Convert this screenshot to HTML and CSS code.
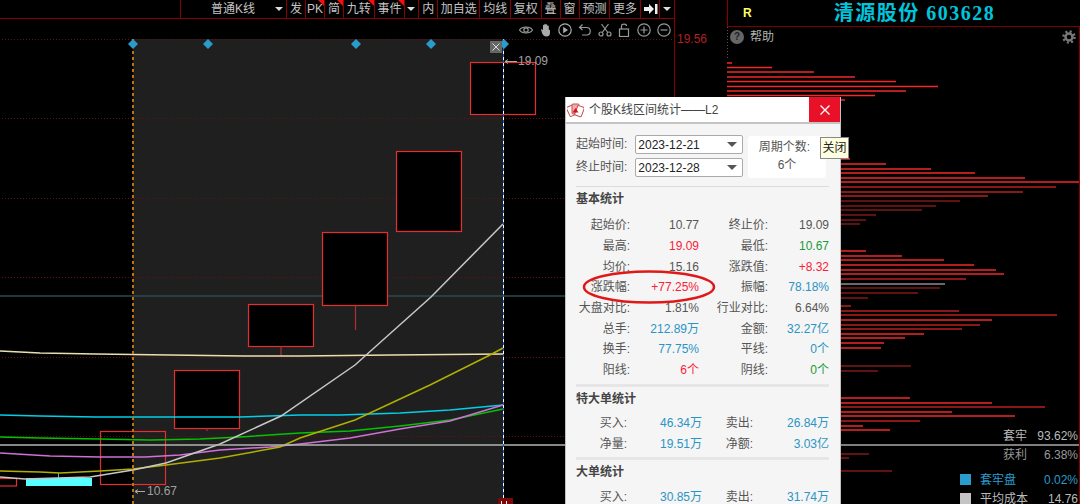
FILE: index.html
```html
<!DOCTYPE html>
<html lang="en">
<head>
  <meta charset="UTF-8">
  <title>个股K线区间统计</title>
  <link rel="stylesheet" href="styles.css">
</head>
<body>
<div class="screen">

  <!-- Left: toolbar + K line chart -->
  <div class="main">
    <div class="toolbar">
      <div class="cell cell-kind">普通K线<span class="arrow"></span></div>
      <div class="cell">发</div>
      <div class="cell mark">PK</div>
      <div class="cell mark">简</div>
      <div class="cell cell-two mark">九转</div>
      <div class="cell cell-two mark">事件</div>
      <div class="cell cell-drop"><span class="arrow"></span></div>
      <div class="cell">内</div>
      <div class="cell cell-three">加自选</div>
      <div class="cell cell-two">均线</div>
      <div class="cell cell-two">复权</div>
      <div class="cell">叠</div>
      <div class="cell">窗</div>
      <div class="cell cell-two">预测</div>
      <div class="cell cell-two">更多</div>
      <div class="cell cell-icon">
        <svg width="14" height="12" viewBox="0 0 14 12"><path d="M0 4H5V1L10 6L5 11V8H0Z" fill="#eee"/><rect x="11" y="1" width="2.5" height="10" fill="#eee"/></svg>
      </div>
      <div class="cell cell-drop"><span class="arrow"></span></div>
    </div>

    <div class="chart">
      <svg class="chart-svg" width="727" height="485" viewBox="0 19 727 485">
        <!-- selected range -->
        <rect x="133" y="39" width="370" height="465" fill="#1f1f1f"/>

        <!-- grid -->
        <path d="M2 39.5H674M2 118.5H674M2 198.5H674M2 277.5H674M2 357.5H674M2 436.5H674" stroke="#6a0f0f" stroke-dasharray="1 2" fill="none"/>
        <path d="M674.5 19V504" stroke="#8a0000" fill="none"/>
        <path d="M0 296H565" stroke="#2f4a4f" stroke-width="1.500" fill="none"/>

        <!-- candles -->
        <g fill="#000" stroke="#e62e2e" stroke-width="1.200">
          <rect x="-10.5" y="478.5" width="27" height="7.5"/>
          <rect x="100.5" y="431.5" width="65" height="53" fill="none"/>
          <rect x="174.5" y="370.5" width="65" height="58"/>
          <rect x="248.5" y="304.5" width="65" height="42"/>
          <rect x="322.5" y="232.5" width="65" height="73"/>
          <rect x="396.5" y="151.5" width="65" height="80"/>
          <rect x="470.5" y="62.5" width="65" height="52"/>
          <path d="M207 428V431M281 346V356M355.500 305V330" fill="none" stroke="#b03030"/>
        </g>
        <rect x="26" y="478" width="66" height="8" fill="#5ff"/>
        <path d="M58.500 473V478" stroke="#3cc" fill="none"/>

        <!-- averages -->
        <g fill="none" stroke-width="1.500">
          <polyline stroke="#e8e0b0" points="0,351 40,353 96,354 170,355 244,356 300,356 392,355 503,354"/>
          <polyline stroke="#00cfe6" points="0,415 40,416 96,417 240,417 300,415 340,415 400,413 450,410 503,405"/>
          <polyline stroke="#00c400" points="0,437 40,438 100,439 150,440 200,439 240,437 300,433 350,431 400,426 450,420 503,409"/>
          <polyline stroke="#d070d8" points="0,453 50,456 100,457 145,457 180,455 220,450 270,447 300,444 350,438 400,429 450,421 503,405"/>
          <polyline stroke="#b0b000" points="0,471 40,472 60,473 100,471 133,469 166,465 220,458 280,447 300,438 355,420 430,385 490,355 503,348"/>
          <polyline stroke="#c8c8c8" points="0,477 25,479 90,477 133,470 166,463 220,444 281,416 355,365 431,297 503,224"/>
        </g>
        <path d="M0 445H727" stroke="#b4b4b4" stroke-width="1.500" fill="none"/>

        <!-- range edges -->
        <path d="M133 39V504" stroke="#c07408" stroke-width="2" stroke-dasharray="3 3" fill="none"/>
        <path d="M503.500 39V504" stroke="#1a5fc0" fill="none"/>
        <path d="M503.500 39V504" stroke="#fff" stroke-dasharray="3 3" fill="none"/>
        <g fill="#2a9ccc">
          <path d="M133 39L138 44L133 49L128 44Z"/>
          <path d="M208 39L213 44L208 49L203 44Z"/>
          <path d="M356 39L361 44L356 49L351 44Z"/>
          <path d="M431 39L436 44L431 49L426 44Z"/>
          <path d="M504 39L509 44L504 49L499 44Z"/>
        </g>
        <rect x="490" y="41" width="12" height="12" fill="#666"/>
        <path d="M492.500 43.500L499.500 50.500M499.500 43.500L492.500 50.500" stroke="#ddd" fill="none"/>
        <rect x="498" y="498" width="15" height="6" fill="#7a0a0a"/>
        <path d="M501.500 501V504M506.500 501V504" stroke="#eee" fill="none"/>

        <!-- price tags -->
        <path d="M505 61.500H517M508 59.500L505 61.500L508 63.500" stroke="#aaa" fill="none"/>
        <path d="M135 491.500H145M138 489.500L135 491.500L138 493.500" stroke="#aaa" fill="none"/>
        <text class="tag" x="518" y="65">19.09</text>
        <text class="tag" x="147" y="495">10.67</text>
        <text class="tag tag-top" x="677" y="43">19.56</text>
      </svg>

      <div class="tools">
        <svg width="14" height="14" viewBox="0 0 14 14" fill="none" stroke="#999" stroke-width="1.200"><path d="M0.500 7C3 3 11 3 13.500 7C11 11 3 11 0.500 7Z"/><circle cx="7" cy="7" r="2.200"/></svg>
        <svg width="14" height="14" viewBox="0 0 14 14" fill="#aaa"><path d="M2 6.500L3 6L4 7.500V2.500C4 1.500 5.200 1.500 5.300 2.500V1.500C5.300 0.500 6.700 0.500 6.800 1.500V2C6.900 1 8.200 1 8.300 2V3C8.500 2.200 9.800 2.300 9.800 3.300V7C10 6.500 11 6.500 11 7.500V10C11 12.500 9.500 13.500 7.500 13.500C5 13.500 4 12 3 10Z"/></svg>
        <svg width="14" height="14" viewBox="0 0 14 14" fill="none" stroke="#aaa" stroke-width="1.200"><circle cx="7" cy="7" r="6.200"/><path d="M5.200 3.800L10 7L5.200 10.200Z" fill="#aaa" stroke="none"/></svg>
        <svg width="14" height="14" viewBox="0 0 14 14" fill="none" stroke="#999" stroke-width="1.200"><path d="M4.500 1.500L1.500 4.500L4.500 7M1.500 4.500H8.500C13.500 4.500 13.500 12 8.500 12H4"/></svg>
        <svg width="14" height="14" viewBox="0 0 14 14" fill="none" stroke="#999" stroke-width="1.200"><circle cx="3" cy="11" r="2"/><circle cx="11" cy="11" r="2"/><path d="M4.200 9.500L10.500 1M9.800 9.500L3.500 1"/></svg>
        <svg width="14" height="14" viewBox="0 0 14 14" fill="none" stroke="#999" stroke-width="1.200"><rect x="2.500" y="6" width="9" height="7.500"/><path d="M4.500 6V3C4.500 0.500 9.500 0.500 9.500 3"/></svg>
        <svg width="14" height="14" viewBox="0 0 14 14" fill="none" stroke="#999" stroke-width="1.200"><circle cx="7" cy="7" r="6.200"/><path d="M3.500 7H10.500M7 3.500V10.500"/></svg>
        <svg width="14" height="14" viewBox="0 0 14 14" fill="none" stroke="#999" stroke-width="1.200"><circle cx="7" cy="7" r="6.200"/><path d="M3.500 7H10.500"/></svg>
      </div>
    </div>
  </div>

  <!-- Right: chip distribution -->
  <div class="side">
    <div class="side-head">
      <span class="side-r">R</span>
      <span class="side-title">清源股份 603628</span>
    </div>
    <div class="side-help">
      <span class="help-icon">?</span>
      <span>帮助</span>
      <svg class="gear" width="14" height="14" viewBox="0 0 14 14" fill="none" stroke="#777"><circle cx="7" cy="7" r="3.500" stroke-width="2.500"/><circle cx="7" cy="7" r="5.500" stroke-width="2.500" stroke-dasharray="2 2.320"/></svg>
    </div>

    <svg class="chips" width="353" height="477" viewBox="727 27 353 477" fill="none" stroke-width="1.500">
      <path stroke="#f02828" d="M727 63H732M727 67.500H772M727 72H814M727 77H855M727 81.500H896M727 86.500H938M727 91H906M727 95.500H875M727 100H845M727 159H850M727 164H886M727 169H931M727 173H975M727 178H1025M727 182H1080M727 251H866M727 256H902M727 260H944M727 265H974M727 270H996M727 274H1004M727 320H992M727 334H924M727 338H905M727 343H884M727 348H881M727 398H910M727 403H992M727 412H952M727 416H1015M727 426H863M727 430H890"/>
      <path stroke="#b82020" d="M727 187H1056M727 192H1023M727 196H988M727 279H966M727 306H851M727 311H959M727 315H1057M727 325H980M727 329H962M727 407H1045M727 421H920"/>
      <path stroke="#7e1818" d="M727 201H960M727 206H936M727 210H922M727 215H876M727 220H866M727 224H860M727 288H940M727 293H918M727 298H868M727 366H911M727 371H878M727 454H869M727 458H849M727 471H892"/>
      <path stroke="#8c8c8c" d="M727 284H945"/>
      <path stroke="#a8a8a8" d="M727 445H1080"/>
      <path stroke="#8a0000" stroke-width="1" d="M1079.500 27V504"/>
      <path stroke="#555" stroke-width="1" stroke-dasharray="1 2" d="M727.500 27V60"/>
    </svg>

    <div class="side-stats">
      <div class="stat-row stat-one"><span>套牢</span><b>93.62%</b></div>
      <div class="stat-row stat-two"><span>获利</span><b>6.38%</b></div>
      <div class="legend legend-blue"><i></i><span>套牢盘</span><b>0.02%</b></div>
      <div class="legend"><i></i><span>平均成本</span><b>14.76</b></div>
    </div>
  </div>
</div>

<!-- Range statistics dialog -->
<div class="dialog">
  <div class="dialog-title">
    <svg class="cards" width="17" height="16" viewBox="0 0 17 16">
      <rect x="1" y="4" width="7" height="10" rx="1" transform="rotate(-25 4 9)" fill="#fff" stroke="#d04848"/>
      <rect x="5" y="2" width="7" height="10" rx="1" fill="#e8b0b0" stroke="#d04848"/>
      <rect x="9" y="4" width="7" height="10" rx="1" transform="rotate(20 12 9)" fill="#fff" stroke="#d04848"/>
      <path d="M8.500 6L11.500 10.500H5.500Z" fill="#d01818"/>
    </svg>
    <span>个股K线区间统计——L2</span>
    <div class="dialog-close">
      <svg width="12" height="12" viewBox="0 0 12 12" stroke="#fff" stroke-width="1.300"><path d="M1.500 1.500L10.500 10.500M10.500 1.500L1.500 10.500"/></svg>
    </div>
  </div>

  <div class="dialog-body">
    <div class="range">
      <div class="range-fields">
        <div class="field"><label>起始时间:</label><div class="select">2023-12-21<span class="select-arrow"></span></div></div>
        <div class="field"><label>终止时间:</label><div class="select">2023-12-28<span class="select-arrow"></span></div></div>
      </div>
      <div class="period">
        <div class="period-label">周期个数:</div>
        <div>6个</div>
      </div>
    </div>

    <div class="section section-thin">
      <h4>基本统计</h4>
      <div class="stats">
        <span>起始价:</span><b>10.77</b><span>终止价:</span><b>19.09</b>
        <span>最高:</span><b class="red">19.09</b><span>最低:</span><b class="green">10.67</b>
        <span>均价:</span><b>15.16</b><span>涨跌值:</span><b class="red">+8.32</b>
        <span>涨跌幅:</span><b class="red">+77.25%</b><span>振幅:</span><b class="blue">78.18%</b>
        <span>大盘对比:</span><b>1.81%</b><span>行业对比:</span><b>6.64%</b>
        <span>总手:</span><b class="blue">212.89万</b><span>金额:</span><b class="blue">32.27亿</b>
        <span>换手:</span><b class="blue">77.75%</b><span>平线:</span><b class="blue">0个</b>
        <span>阳线:</span><b class="red">6个</b><span>阴线:</span><b class="green">0个</b>
      </div>
    </div>

    <div class="section">
      <h4>特大单统计</h4>
      <div class="stats stats-big">
        <span>买入:</span><b class="blue">46.34万</b><span>卖出:</span><b class="blue">26.84万</b>
        <span>净量:</span><b class="blue">19.51万</b><span>净额:</span><b class="blue">3.03亿</b>
      </div>
    </div>

    <div class="section">
      <h4>大单统计</h4>
      <div class="stats stats-big">
        <span>买入:</span><b class="blue">30.85万</b><span>卖出:</span><b class="blue">31.74万</b>
      </div>
    </div>
  </div>

  <svg class="oval" width="136" height="36" viewBox="0 0 136 36" fill="none"><ellipse cx="68" cy="18" rx="65" ry="15.500" stroke="#e01818" stroke-width="2.500"/></svg>
</div>

<div class="tooltip">关闭</div>

</body>
</html>
```
FILE: styles.css
```css
/* Global */
html, body {
  margin: 0;
  padding: 0;
  width: 1080px;
  height: 504px;
  overflow: hidden;
  background: #000;
  font-family: "Liberation Sans", "Noto Sans CJK SC", sans-serif;
  font-size: 12px;
  line-height: 16px;
  color: #ccc;
}

.screen {
  display: flex;
  height: 504px;
}

/* Toolbar */
.main {
  width: 727px;
  display: flex;
  flex-direction: column;
}

.toolbar {
  display: flex;
  box-sizing: border-box;
  height: 19px;
  padding-left: 180px;
  width: 675px;
  border-bottom: 1px solid #8a0000;
}

.cell {
  position: relative;
  flex: none;
  box-sizing: border-box;
  width: 19px;
  border-right: 1px solid #8a0000;
  line-height: 18px;
  color: #c4c4c4;
  text-align: center;
  white-space: nowrap;
}

.cell-two {
  width: 30.670px;
}

.cell-three {
  width: 42px;
}

.cell-kind {
  width: 107px;
  padding-left: 30px;
  border-left: 1px solid #8a0000;
  text-align: left;
}

.cell-drop {
  width: 14px;
}

.cell-drop:last-child {
  width: 15px;
}

.cell-icon {
  padding: 3px 0 0 3px;
}

.cell-icon svg {
  display: block;
}

.mark::after {
  content: "";
  position: absolute;
  top: 0;
  right: 0;
  border-top: 6px solid #f01010;
  border-left: 6px solid transparent;
}

.arrow {
  position: absolute;
  top: 7px;
  right: 3px;
  border-top: 4px solid #ddd;
  border-left: 4px solid transparent;
  border-right: 4px solid transparent;
}

/* Chart */
.chart {
  position: relative;
  flex: 1;
}

.chart-svg {
  display: block;
}

.tag {
  font-size: 12px;
  fill: #a0a0a0;
}

.tag-top {
  fill: #b02020;
}

.tools {
  position: absolute;
  top: 4px;
  left: 519px;
  display: flex;
  gap: 5.700px;
}

/* Side panel */
.side {
  position: relative;
  flex: 1;
}

.side-head {
  position: relative;
  box-sizing: border-box;
  height: 27px;
  border-left: 1px solid #8a0000;
  border-bottom: 1px solid #7a0000;
  display: flex;
  align-items: center;
}

.side-r {
  margin-left: 15px;
  font-weight: bold;
  color: #ffff66;
}

.side-title {
  margin-left: 82px;
  font-family: "Liberation Serif", "Noto Sans CJK SC", serif;
  font-size: 20px;
  font-weight: bold;
  letter-spacing: 1.500px;
  color: #00c4dc;
}

.side-help {
  position: relative;
  z-index: 1;
  display: flex;
  align-items: center;
  gap: 6px;
  height: 20px;
  padding-left: 3px;
  color: #b4b4b4;
}

.help-icon {
  width: 14px;
  height: 14px;
  border-radius: 50%;
  background: #666;
  color: #222;
  font-size: 10px;
  font-weight: bold;
  line-height: 14px;
  text-align: center;
}

.gear {
  margin-left: auto;
  margin-right: 4px;
}

.chips {
  position: absolute;
  top: 27px;
  left: 0;
}

.side-stats {
  position: absolute;
  right: 2px;
  top: 426px;
  width: 120px;
  height: 78px;
  color: #bbb;
}

.stat-row,
.legend {
  display: flex;
  justify-content: space-between;
}

.side-stats b {
  font-weight: normal;
}

.stat-row {
  margin-left: 45px;
}

.stat-row span {
  width: 24px;
}

.stat-one {
  margin-top: 2px;
  height: 19px;
}

.stat-two {
  height: 23px;
  color: #999;
}

.legend {
  align-items: center;
  height: 19px;
  padding-left: 2px;
}

.legend i {
  width: 11px;
  height: 11px;
  margin-right: 9px;
  background: #c4c4c4;
}

.legend span {
  flex: 1;
}

.legend-blue {
  color: #2a9ccc;
}

.legend-blue i {
  background: #2a9ccc;
}

/* Dialog */
.dialog {
  position: absolute;
  left: 565px;
  top: 97px;
  width: 276px;
  height: 407px;
  overflow: hidden;
  background: #f5f5f5;
  color: #555;
  box-sizing: border-box;
  border-left: 1px solid #c0c0c0;
  border-right: 1px solid #c0c0c0;
}

.dialog-title {
  display: flex;
  align-items: center;
  height: 25px;
  background: #fff;
  border-bottom: 2px solid #c4c4c4;
  color: #444;
}

.cards {
  margin: 0 5px 0 1px;
}

.dialog-close {
  display: flex;
  align-items: center;
  justify-content: center;
  width: 31px;
  height: 25px;
  margin-left: auto;
  background: #e81128;
}

.dialog-body {
  padding: 11px 11px 0 10px;
}

.range {
  display: flex;
  justify-content: space-between;
  height: 44px;
}

.range-fields {
  display: flex;
  flex-direction: column;
  gap: 4px;
}

.field {
  display: flex;
  align-items: center;
  gap: 8px;
}

.field label {
  margin-bottom: 2px;
}

.select {
  position: relative;
  box-sizing: border-box;
  width: 108px;
  height: 19px;
  padding-left: 2px;
  background: #fff;
  border: 1px solid #aaa;
  border-radius: 2px;
  color: #222;
  line-height: 18px;
}

.select-arrow {
  position: absolute;
  top: 6px;
  right: 5px;
  border-top: 5px solid #555;
  border-left: 5px solid transparent;
  border-right: 5px solid transparent;
}

.period {
  box-sizing: border-box;
  width: 78px;
  height: 42px;
  margin: 1px 3px 0 0;
  padding-top: 2px;
  background: #fff;
  border-radius: 3px;
  text-align: center;
  line-height: 18px;
}

.period-label {
  margin-right: 5px;
}

.section {
  margin-top: 0;
  border-top: 3px solid #e6e6e6;
}

.section-thin {
  margin-top: 7px;
  border-top: 1px solid #dcdcdc;
}

.section h4 {
  margin: 4px 0 0;
  font-size: 12px;
  font-weight: bold;
  line-height: 16px;
  color: #444;
}

.stats {
  display: grid;
  grid-template-columns: 54px 69px 69px 61px;
  grid-auto-rows: 20.700px;
  margin-top: 8px;
  padding-bottom: 3px;
  align-items: center;
  text-align: right;
}

.stats b {
  font-weight: normal;
}

.stats-big {
  grid-template-columns: 51px 75px 51px 76px;
  margin-top: 6px;
  padding-bottom: 3px;
}

.section:last-child .stats-big {
  margin-top: 7px;
}

.red { color: #f82238; }
.stats .green { color: #1a9a3a; }
.stats .blue { color: #2a94c4; }

.oval {
  position: absolute;
  left: 15px;
  top: 172px;
}

/* Tooltip over the close button */
.tooltip {
  position: absolute;
  left: 820px;
  top: 137px;
  box-sizing: border-box;
  width: 29px;
  height: 22px;
  background: #ffffe1;
  border: 1px solid #888;
  color: #222;
  line-height: 20px;
  text-align: center;
  overflow: hidden;
}
```
